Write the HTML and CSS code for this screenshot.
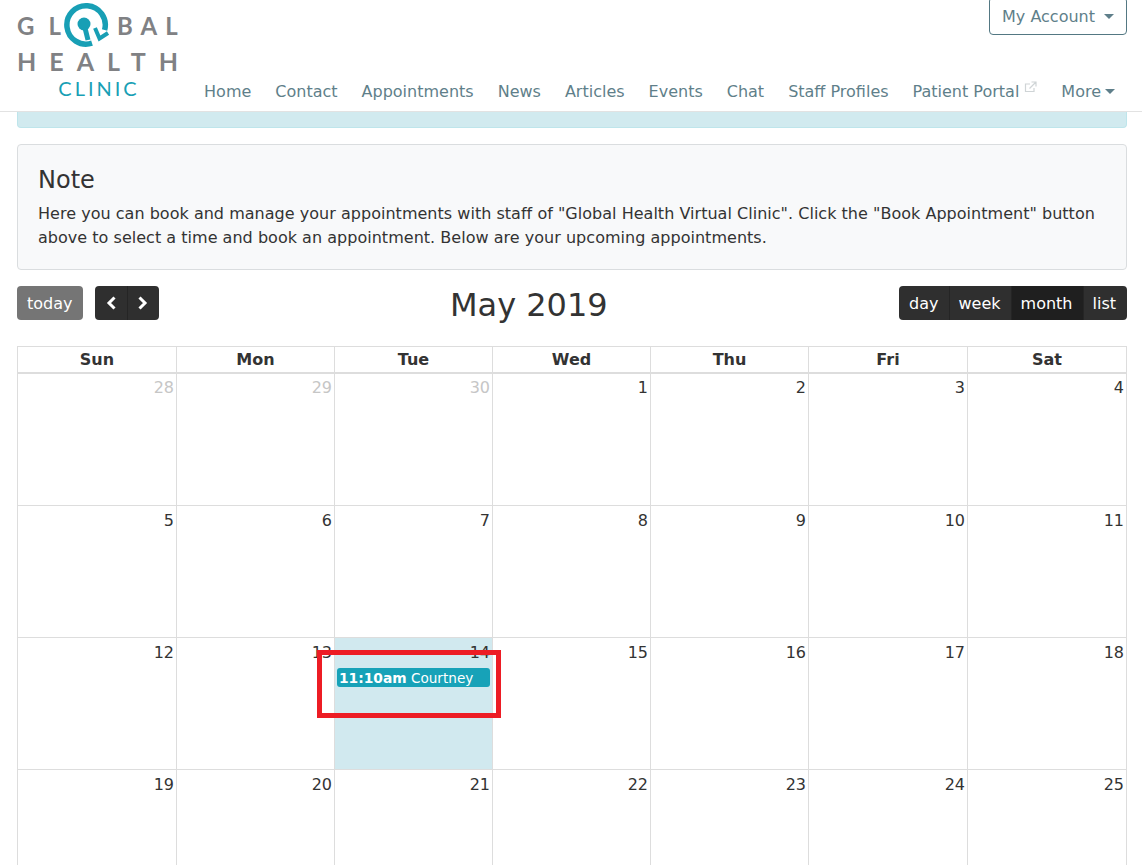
FILE: index.html
```html
<!DOCTYPE html>
<html lang="en">
<head>
    <meta charset="UTF-8">
    <meta name="viewport" content="width=device-width, initial-scale=1.0">
    <title>Appointments</title>
    <link rel="stylesheet" href="styles.css">
</head>
<body>
    <header class="site-header">
        <a class="logo" href="#">
            <div class="logo-top">
                <span class="logo-gl">GL</span>
                <svg class="logo-ring" width="48" height="46" viewBox="0 0 48 46" aria-hidden="true">
                    <path d="M30 41.200A19.200 19.200 0 1 1 42.600 28" fill="none" stroke="#189fb5" stroke-width="5.500"/>
                    <circle cx="22" cy="22" r="6.500" fill="#189fb5"/>
                    <path d="M23 26L26 38" stroke="#189fb5" stroke-width="5"/>
                    <path d="M33 26L37.500 36.500L46 31" fill="none" stroke="#189fb5" stroke-width="4"/>
                </svg>
                <span class="logo-bal">BAL</span>
            </div>
            <div class="logo-middle">HEALTH</div>
            <div class="logo-bottom">CLINIC</div>
        </a>
        <div class="header-right">
            <button class="account-btn" type="button">My Account<span class="caret caret-account"></span></button>
            <nav class="main-nav">
                <a href="#">Home</a>
                <a href="#">Contact</a>
                <a href="#">Appointments</a>
                <a href="#">News</a>
                <a href="#">Articles</a>
                <a href="#">Events</a>
                <a href="#">Chat</a>
                <a href="#">Staff Profiles</a>
                <a href="#">Patient Portal<svg class="external" width="13" height="12" viewBox="0 0 13 12" aria-hidden="true"><path d="M10 7V10.500H1.500V3H6M7.500 1H12V5.500M12 1L5.500 7.500" fill="none" stroke="#cfd4d6" stroke-width="1.200"/></svg></a>
                <a class="more" href="#">More<span class="caret"></span></a>
            </nav>
        </div>
    </header>

    <main class="content">
        <div class="info-strip"></div>

        <section class="note">
            <h4>Note</h4>
            <p>Here you can book and manage your appointments with staff of "Global Health Virtual Clinic". Click the "Book Appointment" button above to select a time and book an appointment. Below are your upcoming appointments.</p>
        </section>

        <div class="toolbar">
            <div class="toolbar-left">
                <button class="btn btn-today" type="button">today</button>
                <div class="btn-group">
                    <button class="btn btn-arrow" type="button"><svg width="12" height="14" viewBox="0 0 12 14" aria-hidden="true"><path d="M9.500 1.500L4 7L9.500 12.500" fill="none" stroke="#fff" stroke-width="3"/></svg></button>
                    <button class="btn btn-arrow" type="button"><svg width="12" height="14" viewBox="0 0 12 14" aria-hidden="true"><path d="M2.500 1.500L8 7L2.500 12.500" fill="none" stroke="#fff" stroke-width="3"/></svg></button>
                </div>
            </div>
            <h2>May 2019</h2>
            <div class="btn-group">
                <button class="btn" type="button">day</button>
                <button class="btn" type="button">week</button>
                <button class="btn active" type="button">month</button>
                <button class="btn btn-list" type="button">list</button>
            </div>
        </div>

        <table class="calendar">
            <thead>
                <tr><th>Sun</th><th>Mon</th><th>Tue</th><th>Wed</th><th>Thu</th><th>Fri</th><th>Sat</th></tr>
            </thead>
            <tbody>
                <tr>
                    <td class="other">28</td><td class="other">29</td><td class="other">30</td><td>1</td><td>2</td><td>3</td><td>4</td>
                </tr>
                <tr>
                    <td>5</td><td>6</td><td>7</td><td>8</td><td>9</td><td>10</td><td>11</td>
                </tr>
                <tr>
                    <td>12</td><td>13</td>
                    <td class="today">14<a class="event" href="#"><b>11:10am</b> Courtney</a></td>
                    <td>15</td><td>16</td><td>17</td><td>18</td>
                </tr>
                <tr>
                    <td>19</td><td>20</td><td>21</td><td>22</td><td>23</td><td>24</td><td>25</td>
                </tr>
            </tbody>
        </table>
    </main>

    <div class="highlight"></div>
</body>
</html>
```

FILE: styles.css
```css
html, body {
    height: 865px;
    overflow: hidden;
}

body {
    margin: 0;
    font-family: "DejaVu Sans", Verdana, sans-serif;
    font-size: 16px;
    line-height: 1.5;
    color: #333;
    background-color: white;
}

/* Header */
.site-header {
    display: flex;
    justify-content: space-between;
    height: 111px;
    padding: 0 15px 0 17px;
    border-bottom: 1px solid #e2e2e2;
}

.logo {
    display: block;
    flex: none;
    width: 161px;
    color: #808184;
    text-decoration: none;
    font-family: "Lato", sans-serif;
    font-weight: 700;
}

.logo-top {
    display: flex;
    align-items: center;
    height: 46px;
    margin-top: 2px;
    font-size: 24px;
    line-height: 1;
}

.logo-top > * {
    flex: none;
}

.logo-gl, .logo-bal {
    padding-top: 2px;
}

.logo-gl {
    width: 45px;
    letter-spacing: 14px;
    white-space: nowrap;
}

.logo-bal {
    margin-left: 7px;
    letter-spacing: 8px;
}

.logo-middle {
    height: 26px;
    font-size: 25px;
    line-height: 26px;
    letter-spacing: 13px;
    white-space: nowrap;
}

.logo-bottom {
    margin-top: 2px;
    padding-left: 3px;
    font-size: 20px;
    line-height: 24px;
    text-align: center;
    color: #189fb5;
    font-weight: 400;
    letter-spacing: 3px;
}

.header-right {
    display: flex;
    flex-direction: column;
    align-items: flex-end;
}

.account-btn {
    height: 38px;
    margin-top: -3px;
    padding: 0 12px;
    background: white;
    border: 1px solid #537883;
    border-radius: 4px;
    color: #5f7f8a;
    font-family: inherit;
    font-size: 16px;
}

.caret {
    display: inline-block;
    margin-left: 4px;
    vertical-align: 3px;
    border-top: 5px solid currentColor;
    border-left: 5px solid transparent;
    border-right: 5px solid transparent;
}

.caret-account {
    margin-left: 9px;
}

.main-nav {
    display: flex;
    gap: 24px;
    margin-top: 45px;
    padding-right: 12px;
}

.main-nav a {
    color: #5f7f8a;
    text-decoration: none;
    white-space: nowrap;
}

.external {
    margin: 1px 0 0 5px;
    vertical-align: top;
}

/* Content */
.content {
    padding: 0 15px 0 17px;
}

.info-strip {
    height: 15px;
    margin-bottom: 16px;
    background-color: #d1eaef;
    border: 1px solid #bee5eb;
    border-top: none;
    border-radius: 0 0 4px 4px;
}

.note {
    padding: 21px 20px 19px;
    background-color: #f8f9fa;
    border: 1px solid #dadddf;
    border-radius: 4px;
}

.note h4 {
    margin: 0 0 7px;
    font-size: 24px;
    font-weight: 400;
    line-height: 29px;
}

.note p {
    margin: 0;
    font-size: 16px;
    line-height: 24px;
    letter-spacing: 0.025px;
}

.toolbar {
    display: flex;
    justify-content: space-between;
    align-items: center;
    height: 34px;
    margin: 16px 0 26px;
}

.toolbar h2 {
    margin: 4px 0 0 0;
    font-size: 32px;
    font-weight: 400;
    line-height: 38px;
}

.toolbar-left {
    display: flex;
    gap: 12px;
}

.btn-group {
    display: flex;
}

.btn {
    height: 34px;
    padding: 0 10px;
    background-color: #2f2f2f;
    border: none;
    box-shadow: inset 1px 0 0 #252525;
    color: white;
    font-family: inherit;
    font-size: 16px;
}

.btn-group .btn:first-child {
    box-shadow: none;
    border-radius: 4px 0 0 4px;
}

.btn-group .btn:last-child {
    border-radius: 0 4px 4px 0;
}

.btn.active {
    background-color: #1f1f1f;
}

.btn-list {
    padding-right: 11px;
}

.btn-today {
    box-shadow: none;
    border-radius: 4px;
    background-color: #757575;
}

.btn-arrow {
    width: 32px;
    padding: 0;
}

.btn-arrow svg {
    display: block;
    margin: auto;
}

/* Calendar */
.calendar {
    width: 1110px;
    table-layout: fixed;
    border-collapse: collapse;
}

.calendar th, .calendar td {
    border: 1px solid #dddddd;
}

.calendar th {
    width: 157px;
    height: 25px;
    padding: 0;
    border-bottom-width: 2px;
    font-size: 16px;
    line-height: 24px;
    font-weight: 700;
}

.calendar th:nth-child(1), .calendar th:nth-child(6), .calendar th:nth-child(7) {
    width: 158px;
}

.calendar td {
    height: 132px;
    padding: 2px 2px 0 2px;
    text-align: right;
    vertical-align: top;
    font-size: 16px;
    line-height: 24px;
    box-sizing: border-box;
}

.calendar tbody tr + tr td {
    padding-top: 3px;
}

.calendar td.other {
    color: #c6c6c6;
}

.calendar td.today {
    background-color: #d1e9ef;
}

.event {
    display: block;
    height: 19px;
    margin-top: 3px;
    padding-left: 2px;
    background-color: #17a2b8;
    border-radius: 3px;
    color: white;
    text-align: left;
    text-decoration: none;
    font-size: 13.600px;
    line-height: 20px;
    white-space: nowrap;
}

.event b {
    font-size: 13.800px;
}

/* Red box drawn over the screenshot */
.highlight {
    position: absolute;
    left: 317px;
    top: 650px;
    width: 184px;
    height: 68px;
    border: 5px solid #ed1c24;
    box-sizing: border-box;
}
```
